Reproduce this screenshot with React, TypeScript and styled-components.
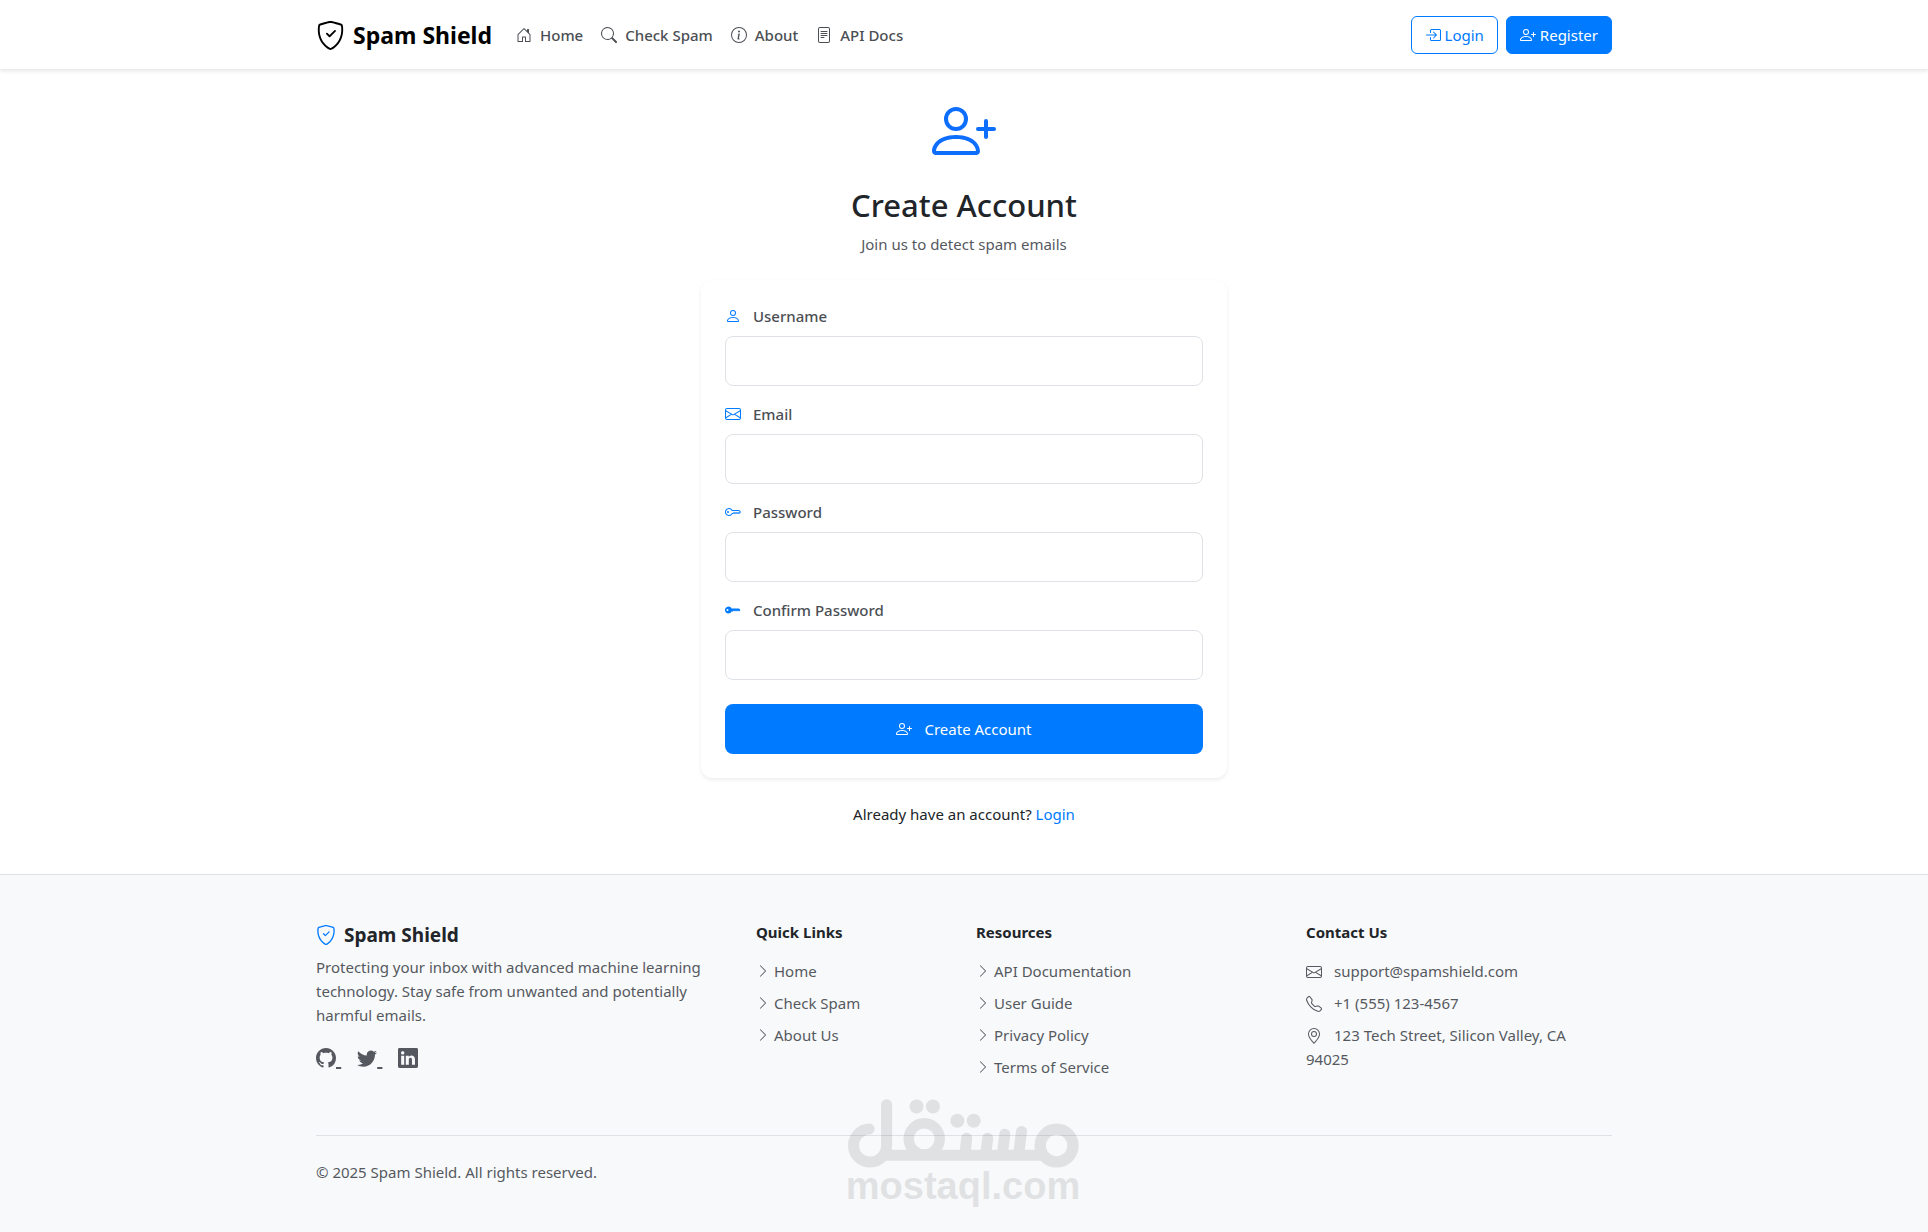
import React, { useState } from 'react';
import styled, { createGlobalStyle, css } from 'styled-components';
import {
  BsBoxArrowInRight,
  BsChevronRight,
  BsEnvelope,
  BsFileText,
  BsGeoAlt,
  BsGithub,
  BsHouseDoor,
  BsInfoCircle,
  BsKey,
  BsKeyFill,
  BsLinkedin,
  BsPerson,
  BsPersonPlus,
  BsSearch,
  BsShieldCheck,
  BsTelephone,
  BsTwitter,
} from 'react-icons/bs';

const color = {
  primary: '#007bff',
  heading: '#212529',
  muted: '#55595f',
  border: '#dee2e6',
  surface: '#f8f9fb',
};

const GlobalStyle = createGlobalStyle`
  *, *::before, *::after { box-sizing: border-box; }
  html, body, #root { min-height: 100%; }
  body {
    margin: 0;
    background: #fff;
    color: ${color.heading};
    font-family: 'Noto Sans', 'Open Sans', sans-serif;
    font-size: 15px;
    line-height: 24px;
  }
  h1, h2, h3, p, ul { margin: 0; padding: 0; }
  ul { list-style: none; }
  svg { flex: none; }
`;

const Page = styled.div`
  display: flex;
  flex-direction: column;
  min-height: 100vh;
`;

const Container = styled.div`
  width: 100%;
  max-width: 1320px;
  margin: 0 auto;
  padding: 0 12px;
`;

const Header = styled.header`
  padding: 16px 0 15px;
  background: #fff;
  box-shadow: 0 2px 4px rgba(0, 0, 0, 0.1);
`;

const HeaderRow = styled(Container)`
  display: flex;
  align-items: center;
`;

const Brand = styled.a`
  display: inline-flex;
  align-items: center;
  gap: 8px;
  margin-right: 24px;
  color: #000;
  font-size: 23px;
  font-weight: 700;
  text-decoration: none;

  svg {
    width: 29px;
    height: 29px;
  }
`;

const Nav = styled.nav`
  display: flex;
  flex: 1;
  gap: 18px;
`;

const NavLink = styled.a`
  display: inline-flex;
  align-items: center;
  gap: 8px;
  color: #4b4f54;
  font-weight: 500;
  text-decoration: none;

  svg {
    width: 16px;
    height: 16px;
  }
`;

const Actions = styled.div`
  display: flex;
  gap: 8px;
`;

const ActionButton = styled.button<{ $filled?: boolean }>`
  display: inline-flex;
  align-items: center;
  gap: 4px;
  height: 38px;
  padding: 0 13px;
  border: 1px solid ${color.primary};
  border-radius: 6px;
  background: #fff;
  color: ${color.primary};
  font: inherit;
  cursor: pointer;

  svg {
    width: 16px;
    height: 16px;
  }

  ${(p) =>
    p.$filled &&
    css`
      background: ${color.primary};
      color: #fff;
    `}
`;

const Main = styled.main`
  display: flex;
  flex-direction: column;
  align-items: center;
  padding: 30px 12px 48px;
`;

const Intro = styled.section`
  display: flex;
  flex-direction: column;
  align-items: center;
  margin-bottom: 24px;

  > svg {
    width: 64px;
    height: 64px;
    margin-bottom: 23px;
    color: #0d6efd;
  }
`;

const Title = styled.h1`
  margin-bottom: 8px;
  font-size: 31px;
  font-weight: 500;
  line-height: 38px;
`;

const Subtitle = styled.p`
  color: ${color.muted};
`;

const Card = styled.form`
  width: 100%;
  max-width: 526px;
  padding: 24px;
  border-radius: 12px;
  background: #fff;
  box-shadow: 0 2px 4px rgba(0, 0, 0, 0.07);
`;

const Field = styled.div`
  margin-bottom: 16px;

  &:last-of-type {
    margin-bottom: 24px;
  }
`;

const Label = styled.label`
  display: flex;
  align-items: center;
  gap: 12px;
  margin-bottom: 8px;
  color: #4b4f54;
  font-weight: 500;

  svg {
    width: 16px;
    height: 16px;
    color: ${color.primary};
  }
`;

const Input = styled.input`
  display: block;
  width: 100%;
  height: 50px;
  padding: 12px;
  border: 1px solid ${color.border};
  border-radius: 8px;
  background: #fff;
  color: ${color.heading};
  font: inherit;
`;

const SubmitButton = styled.button`
  display: flex;
  align-items: center;
  justify-content: center;
  gap: 12px;
  width: 100%;
  height: 50px;
  border: 0;
  border-radius: 8px;
  background: ${color.primary};
  color: #fff;
  font: inherit;
  cursor: pointer;

  svg {
    width: 16px;
    height: 16px;
  }
`;

const Hint = styled.p`
  margin-top: 24px;

  a {
    color: ${color.primary};
    text-decoration: none;
  }
`;

const Footer = styled.footer`
  position: relative;
  flex: 1;
  padding: 48px 0;
  border-top: 1px solid ${color.border};
  background: ${color.surface};
  color: ${color.muted};
`;

const FooterGrid = styled.div`
  display: grid;
  grid-template-columns: 4fr 2fr 3fr 3fr;
  margin-right: -24px;
`;

const FooterColumn = styled.section`
  padding-right: 24px;
`;

const FooterBrand = styled.h2`
  display: flex;
  align-items: center;
  gap: 8px;
  margin-bottom: 8px;
  color: ${color.heading};
  font-size: 19px;
  font-weight: 700;
  line-height: 24px;

  svg {
    width: 20px;
    height: 20px;
    color: ${color.primary};
  }
`;

const FooterHeading = styled.h3`
  margin-bottom: 18px;
  color: ${color.heading};
  font-size: 15px;
  font-weight: 700;
  line-height: 18px;
`;

const Socials = styled.div`
  margin-top: 20px;

  a {
    margin-right: 16px;
    color: ${color.muted};
    font-size: 20px;
  }

  a:last-child {
    margin-right: 0;
  }

  svg {
    vertical-align: -2px;
  }
`;

const List = styled.ul`
  display: flex;
  flex-direction: column;
  gap: 8px;
`;

const FooterLink = styled.a`
  display: flex;
  align-items: center;
  gap: 4px;
  color: ${color.muted};
  text-decoration: none;

  svg {
    width: 14px;
    height: 14px;
  }
`;

const ContactItem = styled.li`
  svg {
    width: 16px;
    height: 16px;
    margin-right: 12px;
    vertical-align: -3px;
  }
`;

const Copyright = styled.p`
  margin-top: 56px;
  padding-top: 24px;
  border-top: 1px solid ${color.border};
`;

const Watermark = styled.div`
  position: absolute;
  left: 50%;
  bottom: 27px;
  display: flex;
  flex-direction: column;
  align-items: center;
  width: 232px;
  margin-left: -117px;
  color: #000;
  opacity: 0.09;
  pointer-events: none;

  svg {
    width: 232px;
    height: 69px;
  }

  span {
    font-family: 'Liberation Sans', Arial, sans-serif;
    font-size: 38px;
    font-weight: 700;
    line-height: 37px;
  }
`;

const navLinks = [
  { icon: BsHouseDoor, text: 'Home' },
  { icon: BsSearch, text: 'Check Spam' },
  { icon: BsInfoCircle, text: 'About' },
  { icon: BsFileText, text: 'API Docs' },
];

const fields = [
  { id: 'username', icon: BsPerson, text: 'Username', type: 'text' },
  { id: 'email', icon: BsEnvelope, text: 'Email', type: 'email' },
  { id: 'password', icon: BsKey, text: 'Password', type: 'password' },
  { id: 'confirm', icon: BsKeyFill, text: 'Confirm Password', type: 'password' },
];

const linkColumns = [
  { title: 'Quick Links', links: ['Home', 'Check Spam', 'About Us'] },
  {
    title: 'Resources',
    links: ['API Documentation', 'User Guide', 'Privacy Policy', 'Terms of Service'],
  },
];

const contacts = [
  { icon: BsEnvelope, text: 'support@spamshield.com' },
  { icon: BsTelephone, text: '+1 (555) 123-4567' },
  { icon: BsGeoAlt, text: '123 Tech Street, Silicon Valley, CA 94025' },
];

function MostaqlMark() {
  return (
    <Watermark aria-hidden="true">
      <svg viewBox="53 59 694 206" fill="none" stroke="currentColor" strokeWidth="33">
        <path strokeLinecap="round" d="M119 148.5A49.5 49.5 0 1 0 171.500 198V76" />
        <path d="M155 227H650" />
        <circle cx="284" cy="178" r="46.500" strokeWidth="31" />
        <path strokeLinecap="round" d="M411 176L406 222M474 176L468 222M525 164L518 222M575 156L567 222" />
        <circle cx="680" cy="198" r="49" strokeWidth="34" />
        <g fill="currentColor" stroke="none">
          <circle cx="261" cy="81" r="21" />
          <circle cx="310" cy="81" r="21" />
          <circle cx="383" cy="124" r="21" />
          <circle cx="432" cy="124" r="21" />
        </g>
      </svg>
      <span>mostaql.com</span>
    </Watermark>
  );
}

export default function App() {
  const [values, setValues] = useState<Record<string, string>>({});

  return (
    <Page>
      <GlobalStyle />
      <Header>
        <HeaderRow>
          <Brand href="#">
            <BsShieldCheck />
            Spam Shield
          </Brand>
          <Nav>
            {navLinks.map(({ icon: Icon, text }) => (
              <NavLink href="#" key={text}>
                <Icon />
                {text}
              </NavLink>
            ))}
          </Nav>
          <Actions>
            <ActionButton type="button">
              <BsBoxArrowInRight />
              Login
            </ActionButton>
            <ActionButton type="button" $filled>
              <BsPersonPlus />
              Register
            </ActionButton>
          </Actions>
        </HeaderRow>
      </Header>

      <Main>
        <Intro>
          <BsPersonPlus />
          <Title>Create Account</Title>
          <Subtitle>Join us to detect spam emails</Subtitle>
        </Intro>
        <Card onSubmit={(e) => e.preventDefault()}>
          {fields.map(({ id, icon: Icon, text, type }) => (
            <Field key={id}>
              <Label htmlFor={id}>
                <Icon />
                {text}
              </Label>
              <Input
                id={id}
                type={type}
                value={values[id] ?? ''}
                onChange={(e) => setValues({ ...values, [id]: e.target.value })}
              />
            </Field>
          ))}
          <SubmitButton type="submit">
            <BsPersonPlus />
            Create Account
          </SubmitButton>
        </Card>
        <Hint>
          Already have an account? <a href="#">Login</a>
        </Hint>
      </Main>

      <Footer>
        <Container>
          <FooterGrid>
            <FooterColumn>
              <FooterBrand>
                <BsShieldCheck />
                Spam Shield
              </FooterBrand>
              <p>
                Protecting your inbox with advanced machine learning technology. Stay safe from
                unwanted and potentially harmful emails.
              </p>
              <Socials>
                <a href="#" aria-label="GitHub">
                  <BsGithub />{' '}
                </a>
                <a href="#" aria-label="Twitter">
                  <BsTwitter />{' '}
                </a>
                <a href="#" aria-label="LinkedIn">
                  <BsLinkedin />
                </a>
              </Socials>
            </FooterColumn>
            {linkColumns.map(({ title, links }) => (
              <FooterColumn key={title}>
                <FooterHeading>{title}</FooterHeading>
                <List>
                  {links.map((text) => (
                    <li key={text}>
                      <FooterLink href="#">
                        <BsChevronRight />
                        {text}
                      </FooterLink>
                    </li>
                  ))}
                </List>
              </FooterColumn>
            ))}
            <FooterColumn>
              <FooterHeading>Contact Us</FooterHeading>
              <List>
                {contacts.map(({ icon: Icon, text }) => (
                  <ContactItem key={text}>
                    <Icon />
                    {text}
                  </ContactItem>
                ))}
              </List>
            </FooterColumn>
          </FooterGrid>
          <Copyright>© 2025 Spam Shield. All rights reserved.</Copyright>
        </Container>
        <MostaqlMark />
      </Footer>
    </Page>
  );
}
